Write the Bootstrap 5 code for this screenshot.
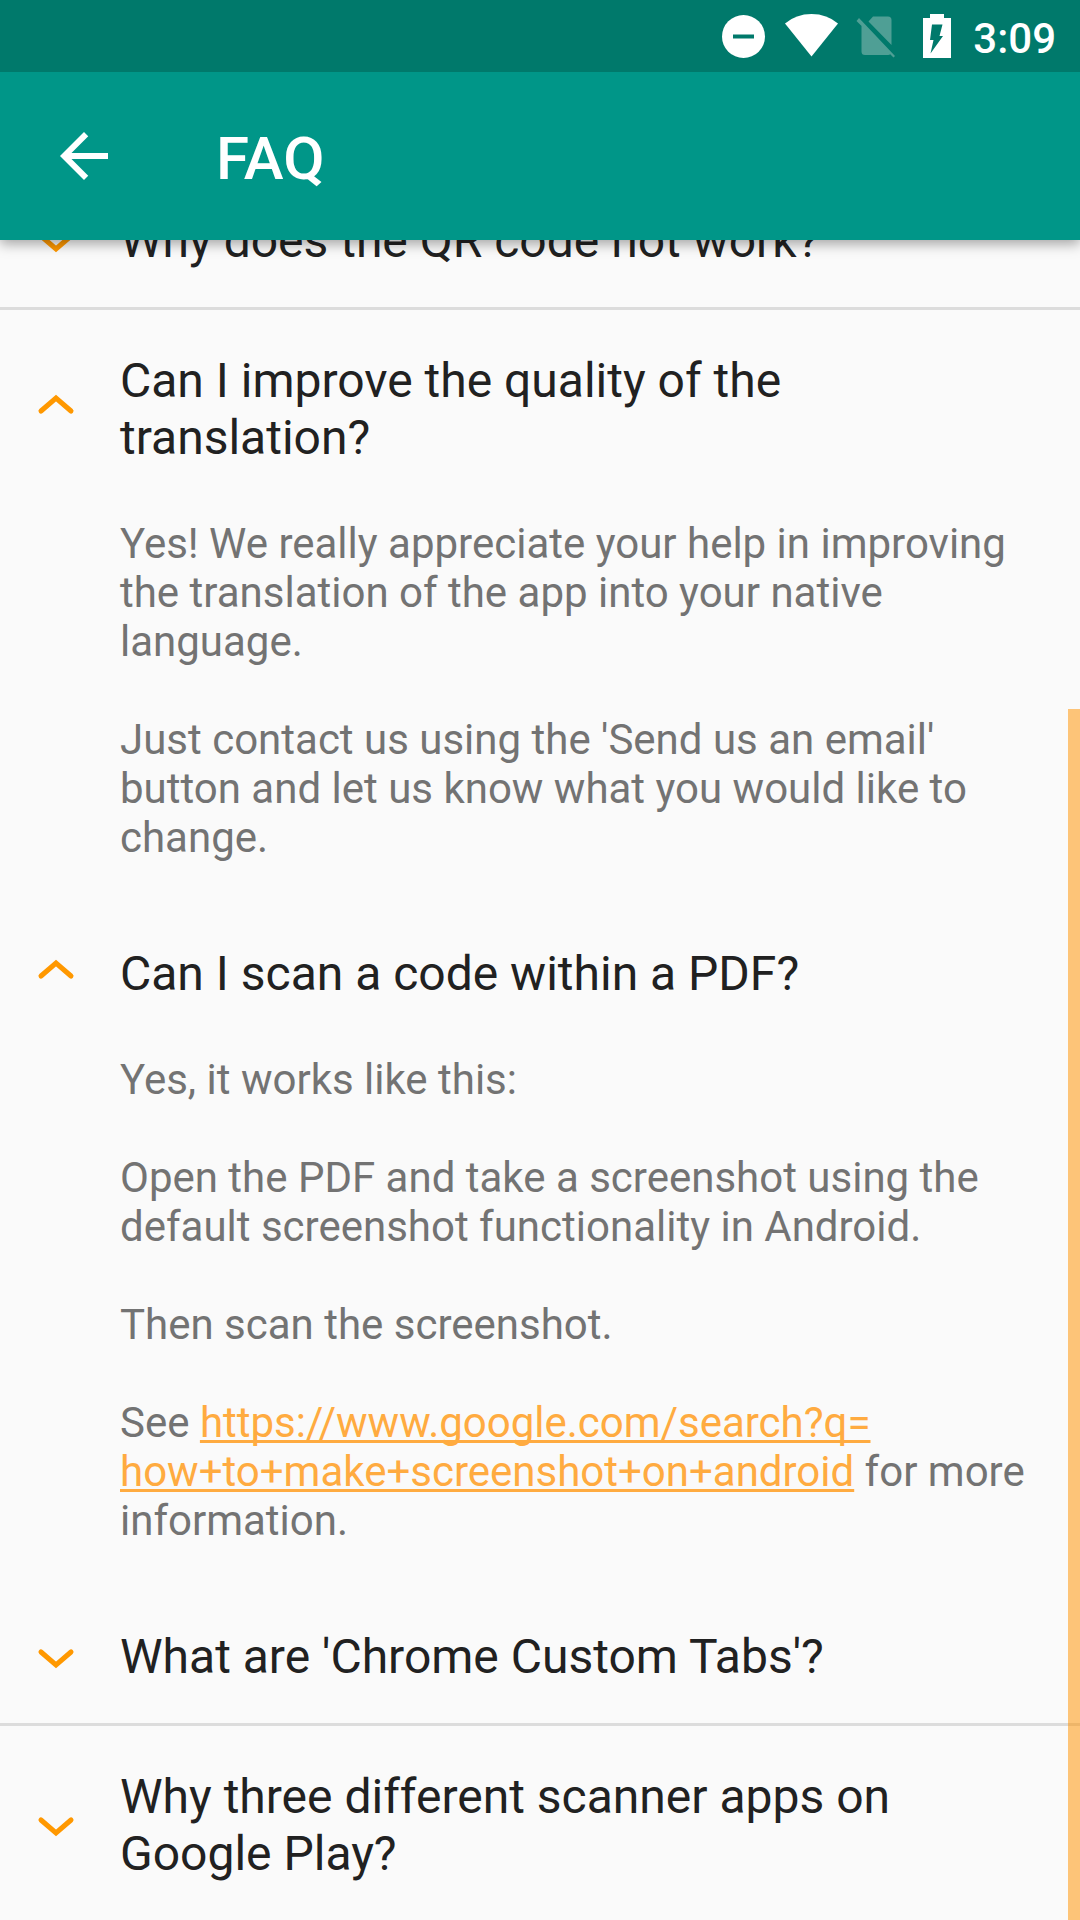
<!DOCTYPE html>
<html lang="en">
<head>
<meta charset="utf-8">
<meta name="viewport" content="width=device-width, initial-scale=1">
<title>FAQ</title>
<link rel="stylesheet" href="https://cdn.jsdelivr.net/npm/bootstrap@5.3.0/dist/css/bootstrap.min.css">
<style>
  body { font-family: Roboto, sans-serif; background: #fafafa; color: #212121; }
  svg { display: block; flex: none; }
  .status-strip { background: #00796b; height: 72px; gap: 18px; padding-right: 24px; font-size: 42px; line-height: 48px; }
  .app-bar { background: #009688; height: 168px; padding: 0 48px; gap: 96px; }
  .app-top { z-index: 2; box-shadow: 0 4px 12px rgba(0, 0, 0, .35); }
  .app-title { font-size: 60px; line-height: 72px; }
  .bar-text { padding-top: 5px; }
  /* the list is scrolled, so its first row starts underneath the app bar */
  .faq-scroll { margin-top: -70px; }
  .faq-toggle { gap: 40px; padding: 42px 42px 38px 32px; font-size: 48px; line-height: 57px; color: inherit; }
  .faq-toggle svg { stroke: #ff9800; stroke-width: 5; stroke-linecap: round; fill: none; }
  .faq-divided { border-bottom: 3px solid #dcdcdc; }
  .faq-answer { padding: 15px 42px 41px 120px; font-size: 42px; line-height: 49px; color: #737373; }
  .faq-answer p { margin-bottom: 49px; }
  .faq-answer p:last-child { margin-bottom: 0; }
  .faq-answer a { color: #ffab40; text-decoration-thickness: 3px; text-decoration-skip-ink: none; text-underline-offset: 3px; }
  .scroll-thumb { top: 539px; bottom: 0; right: 0; width: 12px; background: rgba(255, 145, 0, .52); }
</style>
<script src="https://cdn.jsdelivr.net/npm/bootstrap@5.3.0/dist/js/bootstrap.bundle.min.js"></script>
</head>
<body>
<header class="app-top position-relative text-white">
  <div class="status-strip d-flex align-items-center justify-content-end fw-medium">
    <svg width="44" height="44" viewBox="0 0 44 44" role="img" aria-label="Do not disturb"><circle cx="21.500" cy="22.500" r="21.500" fill="#fff"/><path d="M11 20.500h21v4H11z" fill="#00796b"/></svg>
    <svg width="54" height="44" viewBox="0 0 54 44" role="img" aria-label="Wi-Fi"><path d="M1 9.500Q12 0 27.500 0T54 9.500L27.500 42.500z" fill="#fff"/></svg>
    <svg width="44" height="44" viewBox="0 0 44 44" role="img" aria-label="No SIM card"><path d="M12.500 7.500L17 2.500H32Q35.500 2.500 35.500 6V31zM5.500 11.500L34.500 40Q33.500 41 32 41H9Q5.500 41 5.500 37.500zM3 4L39 42L37.500 43.500L.5 7z" fill="#4f9f95"/></svg>
    <svg width="37" height="44" viewBox="0 0 37 44" role="img" aria-label="Battery charging"><path d="M5 4H12V0H26V4H33V44H5z" fill="#fff"/><path d="M14 10.500H24.500L21.500 22H25L12.500 39.500L15.500 26H12z" fill="#00796b"/></svg>
    <span class="bar-text">3:09</span>
  </div>
  <nav class="app-bar d-flex align-items-center">
    <a href="#" aria-label="Back" class="text-white">
      <svg width="72" height="72" viewBox="0 0 24 24" fill="currentColor"><path d="M20 11H7.830l5.590-5.590L12 4l-8 8 8 8 1.410-1.410L7.830 13H20v-2z"/></svg>
    </a>
    <h1 class="app-title bar-text fw-medium m-0">FAQ</h1>
  </nav>
</header>

<main class="faq-scroll position-relative">
  <section class="faq-divided">
    <h2 class="m-0">
      <button type="button" class="faq-toggle btn border-0 rounded-0 w-100 d-flex align-items-center text-start" aria-expanded="false">
        <svg width="48" height="48" viewBox="0 0 48 48"><path d="M9 19L24 32L39 19"/></svg>
        <span>Why does the QR code not work?</span>
      </button>
    </h2>
  </section>

  <section>
    <h2 class="m-0">
      <button type="button" class="faq-toggle btn border-0 rounded-0 w-100 d-flex align-items-center text-start" data-bs-toggle="collapse" data-bs-target="#answer-translation" aria-expanded="true" aria-controls="answer-translation">
        <svg width="48" height="48" viewBox="0 0 48 48"><path d="M9 26L24 13L39 26"/></svg>
        <span>Can I improve the quality of the translation?</span>
      </button>
    </h2>
    <div id="answer-translation" class="collapse show">
      <div class="faq-answer">
        <p>Yes! We really appreciate your help in improving the translation of the app into your native language.</p>
        <p>Just contact us using the 'Send us an email' button and let us know what you would like to change.</p>
      </div>
    </div>
  </section>

  <section>
    <h2 class="m-0">
      <button type="button" class="faq-toggle btn border-0 rounded-0 w-100 d-flex align-items-center text-start" data-bs-toggle="collapse" data-bs-target="#answer-pdf" aria-expanded="true" aria-controls="answer-pdf">
        <svg width="48" height="48" viewBox="0 0 48 48"><path d="M9 26L24 13L39 26"/></svg>
        <span>Can I scan a code within a PDF?</span>
      </button>
    </h2>
    <div id="answer-pdf" class="collapse show">
      <div class="faq-answer">
        <p>Yes, it works like this:</p>
        <p>Open the PDF and take a screenshot using the default screenshot functionality in Android.</p>
        <p>Then scan the screenshot.</p>
        <p>See <a href="https://www.google.com/search?q=how+to+make+screenshot+on+android">https://www.google.com/search?q=<wbr>how+to+make+screenshot+on+android</a> for more information.</p>
      </div>
    </div>
  </section>

  <section class="faq-divided">
    <h2 class="m-0">
      <button type="button" class="faq-toggle btn border-0 rounded-0 w-100 d-flex align-items-center text-start" aria-expanded="false">
        <svg width="48" height="48" viewBox="0 0 48 48"><path d="M9 19L24 32L39 19"/></svg>
        <span>What are 'Chrome Custom Tabs'?</span>
      </button>
    </h2>
  </section>

  <section>
    <h2 class="m-0">
      <button type="button" class="faq-toggle btn border-0 rounded-0 w-100 d-flex align-items-center text-start" aria-expanded="false">
        <svg width="48" height="48" viewBox="0 0 48 48"><path d="M9 19L24 32L39 19"/></svg>
        <span>Why three different scanner apps on Google Play?</span>
      </button>
    </h2>
  </section>

  <div class="scroll-thumb position-absolute"></div>
</main>
</body>
</html>
